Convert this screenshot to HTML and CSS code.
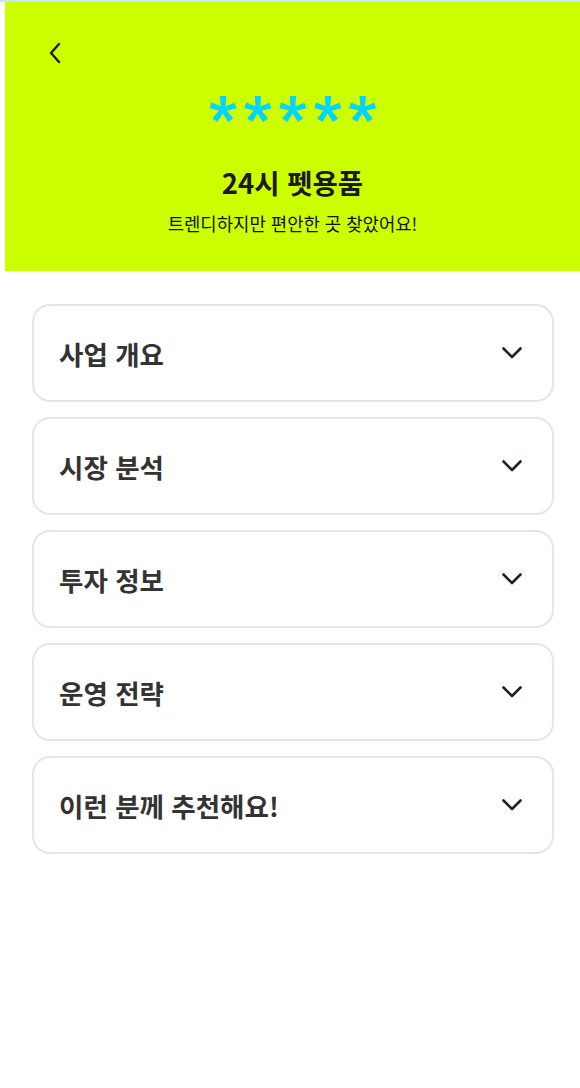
FILE: index.html
```html
<!DOCTYPE html>
<html lang="ko">
<head>
<meta charset="utf-8">
<link rel="stylesheet" href="styles.css">
</head>
<body>
<div class="topline"></div>
<div class="page">
  <header class="hero">
    <button class="back" aria-label="뒤로">
      <svg width="14" height="22" viewBox="0 0 14 22"><path d="M11 2 L3 11 L11 20" fill="none" stroke="#1a1a1a" stroke-width="2.4" stroke-linecap="round" stroke-linejoin="round"/></svg>
    </button>
    <div class="stars">*****</div>
    <h1 class="title">24시 펫용품</h1>
    <p class="subtitle">트렌디하지만 편안한 곳 찾았어요!</p>
  </header>
  <main class="list">
    <div class="card"><span class="card-title">사업 개요</span><svg class="chev" width="20" height="12" viewBox="0 0 20 12"><path d="M1.5 1.5 L10 10 L18.5 1.5" fill="none" stroke="#1c2230" stroke-width="2.6" stroke-linecap="round" stroke-linejoin="round"/></svg></div>
    <div class="card"><span class="card-title">시장 분석</span><svg class="chev" width="20" height="12" viewBox="0 0 20 12"><path d="M1.5 1.5 L10 10 L18.5 1.5" fill="none" stroke="#1c2230" stroke-width="2.6" stroke-linecap="round" stroke-linejoin="round"/></svg></div>
    <div class="card"><span class="card-title">투자 정보</span><svg class="chev" width="20" height="12" viewBox="0 0 20 12"><path d="M1.5 1.5 L10 10 L18.5 1.5" fill="none" stroke="#1c2230" stroke-width="2.6" stroke-linecap="round" stroke-linejoin="round"/></svg></div>
    <div class="card"><span class="card-title">운영 전략</span><svg class="chev" width="20" height="12" viewBox="0 0 20 12"><path d="M1.5 1.5 L10 10 L18.5 1.5" fill="none" stroke="#1c2230" stroke-width="2.6" stroke-linecap="round" stroke-linejoin="round"/></svg></div>
    <div class="card"><span class="card-title">이런 분께 추천해요!</span><svg class="chev" width="20" height="12" viewBox="0 0 20 12"><path d="M1.5 1.5 L10 10 L18.5 1.5" fill="none" stroke="#1c2230" stroke-width="2.6" stroke-linecap="round" stroke-linejoin="round"/></svg></div>
  </main>
</div>
</body>
</html>
```
FILE: styles.css
```css
* { box-sizing: border-box; }
html, body { margin: 0; padding: 0; background: #fff; }
body { font-family: "Noto Sans CJK KR", "Noto Sans", sans-serif; color: #222; }
.topline { height: 2px; background: #c4e6ff; }
.page { margin-left: 5px; }
.hero {
  background: #ccff00;
  height: 269px;
  position: relative;
  display: flex;
  flex-direction: column;
  align-items: center;
  padding-top: 86px;
}
.back {
  position: absolute;
  left: 40px;
  top: 39px;
  border: 0;
  background: none;
  padding: 0;
  width: 20px;
  height: 24px;
  display: flex;
  align-items: center;
  justify-content: center;
}
.stars {
  font-family: "Roboto", sans-serif;
  font-size: 60px;
  font-weight: 900;
  color: #00d4ff;
  line-height: 60px;
  letter-spacing: 7px;
  padding-left: 7px;
  height: 56px;
}
.title {
  margin: 20px 0 0;
  font-size: 27.5px;
  font-weight: 700;
  line-height: 36px;
  color: #1a1a1a;
}
.subtitle {
  margin: 11px 0 0;
  font-size: 17.8px;
  line-height: 24px;
  color: #111;
}
.list {
  padding: 33px 26px 0 27px;
  display: flex;
  flex-direction: column;
  gap: 15px;
}
.card {
  height: 98px;
  border: 2px solid #e6e6ea;
  border-radius: 18px;
  display: flex;
  align-items: center;
  justify-content: space-between;
  padding: 0 30px 0 25px;
}
.card-title {
  font-size: 26.5px;
  font-weight: 700;
  color: #333;
}
.chev { display: block; }
```
